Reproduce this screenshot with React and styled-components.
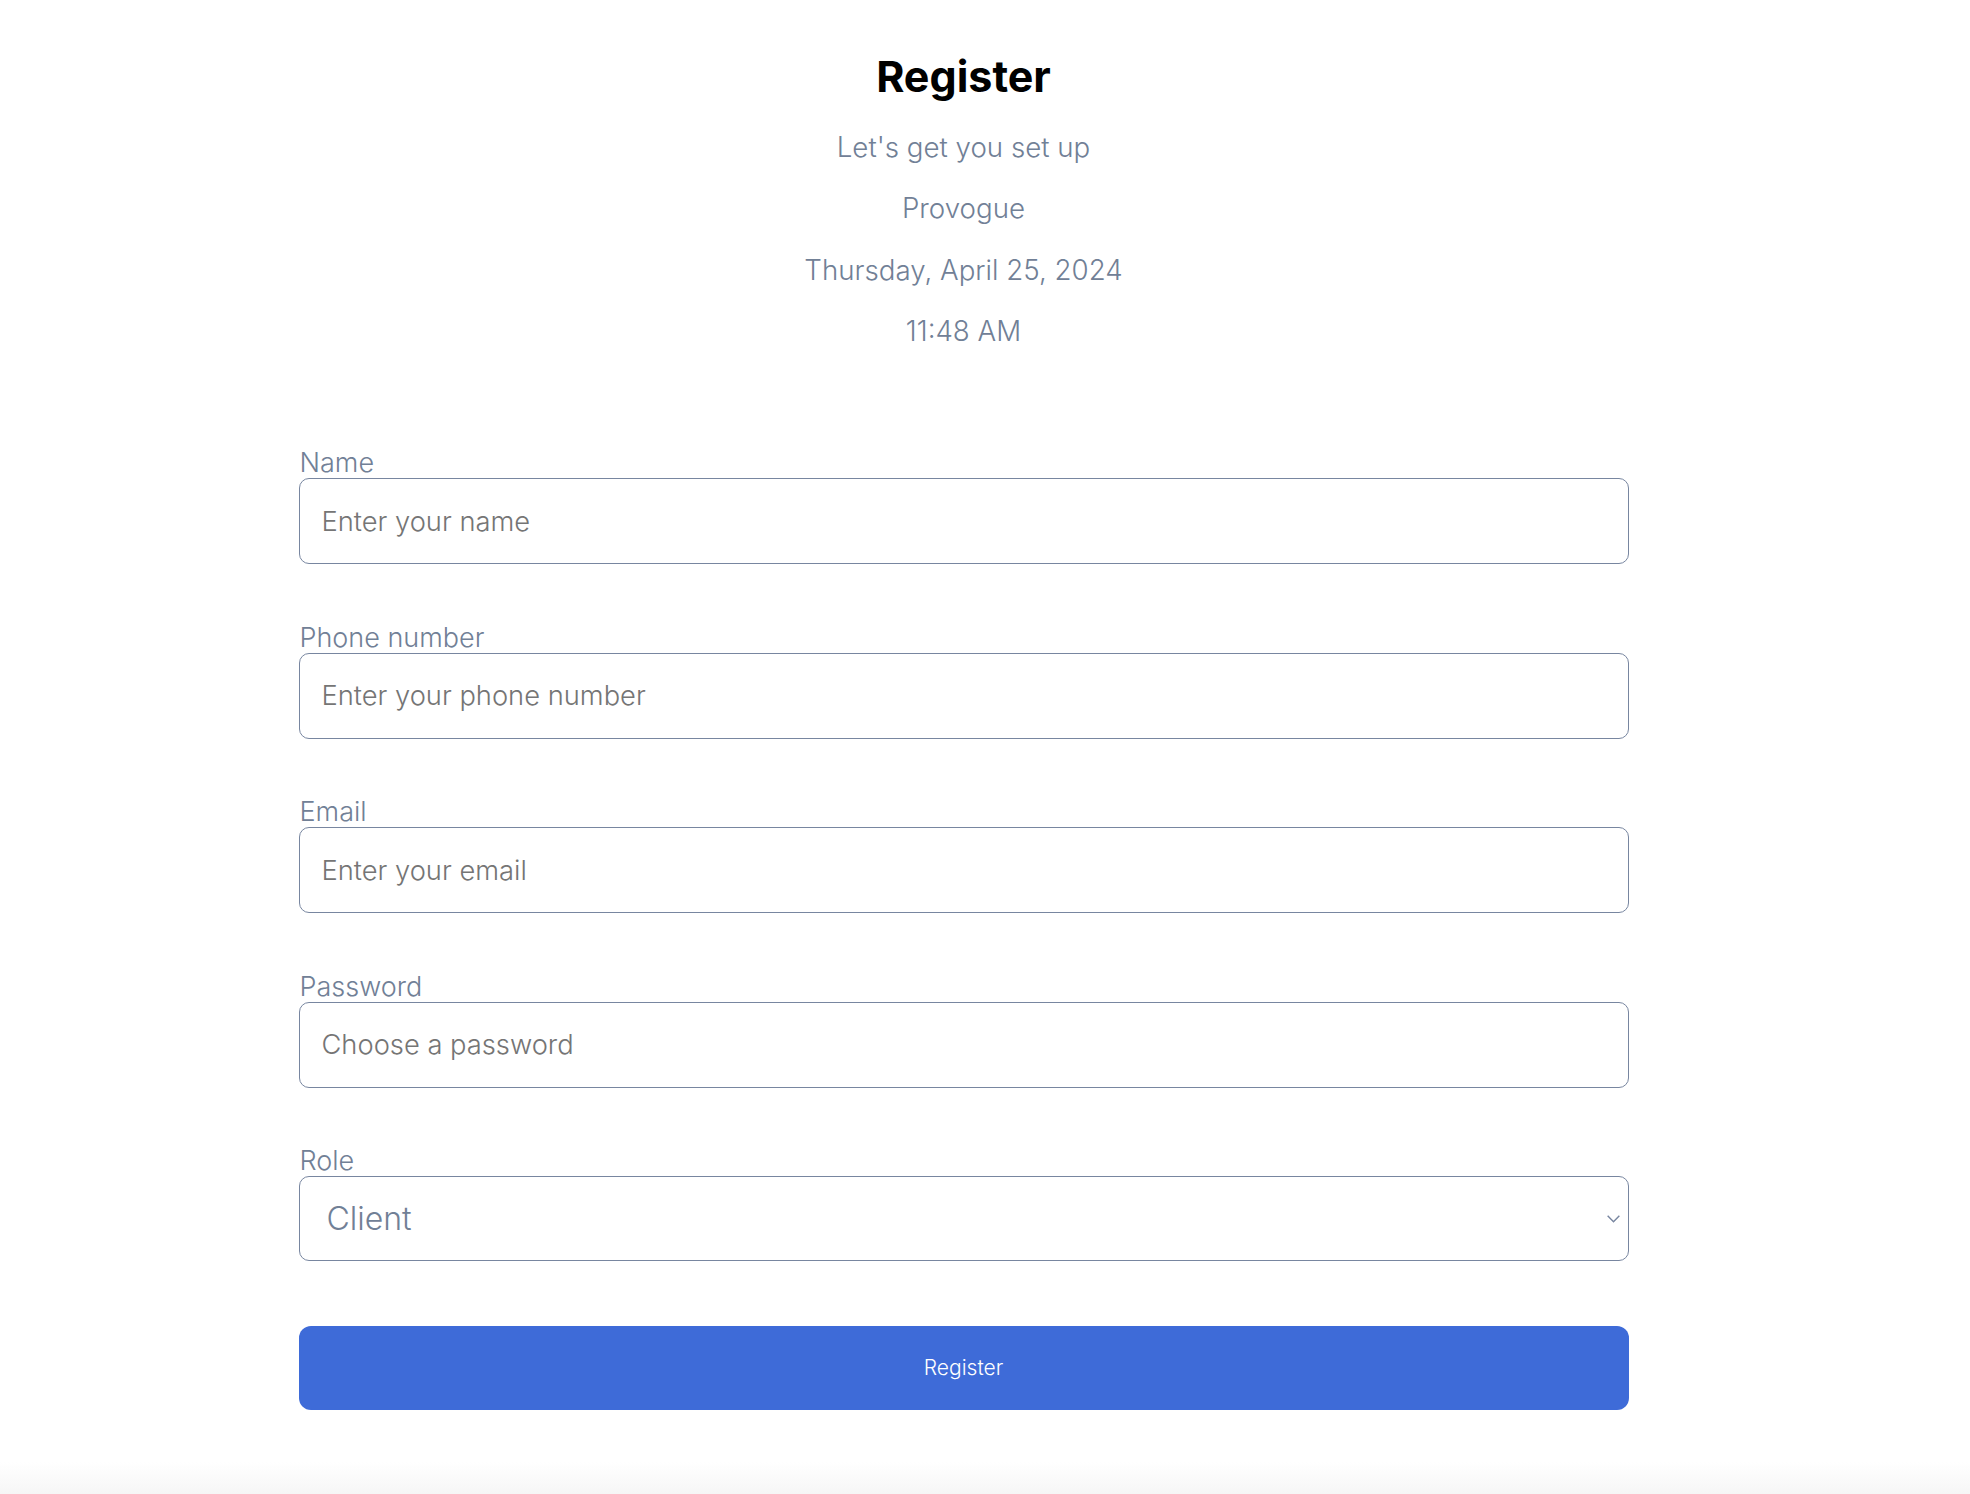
import React from "react";
import styled, { createGlobalStyle } from "styled-components";

const COLORS = {
  muted: "#718096",
  border: "#7886a0",
  placeholder: "#757575",
  blue: "#3e6bd8",
};

const GlobalStyle = createGlobalStyle`
  * {
    box-sizing: border-box;
  }
  html, body {
    margin: 0;
    padding: 0;
  }
  body {
    font-family: Inter, "Noto Sans", sans-serif;
    background: #ffffff;
  }
`;

const FIELDS = [
  { id: "name", label: "Name", type: "text", placeholder: "Enter your name" },
  { id: "phone", label: "Phone number", type: "tel", placeholder: "Enter your phone number" },
  { id: "email", label: "Email", type: "email", placeholder: "Enter your email" },
  { id: "password", label: "Password", type: "password", placeholder: "Choose a password" },
];

const App = () => {
  return (
    <>
      <GlobalStyle />
      <Page>
        <Header>
          <Title>Register</Title>
          <SubLine>Let's get you set up</SubLine>
          <SubLine>Provogue</SubLine>
          <SubLine>Thursday, April 25, 2024</SubLine>
          <SubLine>11:48 AM</SubLine>
        </Header>

        <Form onSubmit={(e) => e.preventDefault()}>
          {FIELDS.map((f) => (
            <Field key={f.id}>
              <Label htmlFor={f.id}>{f.label}</Label>
              <Input id={f.id} type={f.type} placeholder={f.placeholder} />
            </Field>
          ))}

          <Field>
            <Label htmlFor="role">Role</Label>
            <SelectWrap>
              <Select id="role" defaultValue="client">
                <option value="client">Client</option>
                <option value="admin">Admin</option>
              </Select>
              <Chevron viewBox="0 0 16 10" aria-hidden="true">
                <path d="M1.5 1.5 L8 8 L14.5 1.5" />
              </Chevron>
            </SelectWrap>
          </Field>

          <SubmitButton type="submit">Register</SubmitButton>
        </Form>
      </Page>
    </>
  );
};

const Page = styled.div`
  min-height: 1494px;
  padding: 50px 43px 0 0;
  background: linear-gradient(to bottom, #ffffff 1462px, #f6f6f6 1494px);
`;

const Header = styled.header`
  display: flex;
  flex-direction: column;
  align-items: center;
  gap: 21.5px;
`;

const Title = styled.h1`
  margin: 0 0 3px;
  font-size: 43px;
  line-height: 52px;
  font-weight: 700;
  color: #000;
`;

const SubLine = styled.p`
  margin: 0;
  font-size: 27.7px;
  line-height: 40px;
  font-weight: 300;
  color: ${COLORS.muted};
`;

const Form = styled.form`
  width: 1330px;
  margin: 96px auto 0;
  display: flex;
  flex-direction: column;
  gap: 57.5px;
`;

const Field = styled.div`
  display: flex;
  flex-direction: column;
`;

const Label = styled.label`
  font-size: 27px;
  line-height: 31px;
  font-weight: 300;
  padding-left: 1px;
  color: ${COLORS.muted};
`;

const Input = styled.input`
  height: 86px;
  width: 100%;
  padding: 0 22px;
  border: 1.5px solid ${COLORS.border};
  border-radius: 10px;
  font-family: inherit;
  font-size: 27.3px;
  font-weight: 300;
  color: #333;
  background: #fff;
  outline: none;

  &::placeholder {
    color: ${COLORS.placeholder};
  }
`;

const SelectWrap = styled.div`
  position: relative;
`;

const Select = styled.select`
  appearance: none;
  height: 85px;
  width: 100%;
  padding: 0 60px 0 27px;
  border: 1.5px solid ${COLORS.border};
  border-radius: 10px;
  font-family: inherit;
  font-size: 32px;
  font-weight: 300;
  color: ${COLORS.muted};
  background: #fff;
  outline: none;
`;

const Chevron = styled.svg`
  position: absolute;
  right: 8px;
  top: 50%;
  width: 15px;
  height: 9px;
  transform: translateY(-50%);
  fill: none;
  stroke: ${COLORS.border};
  stroke-width: 1.6;
  pointer-events: none;
`;

const SubmitButton = styled.button`
  margin-top: 7px;
  height: 84px;
  width: 100%;
  border: none;
  border-radius: 12px;
  background: ${COLORS.blue};
  color: #fff;
  font-family: inherit;
  font-size: 21px;
  font-weight: 300;
  cursor: pointer;
`;

export default App;
